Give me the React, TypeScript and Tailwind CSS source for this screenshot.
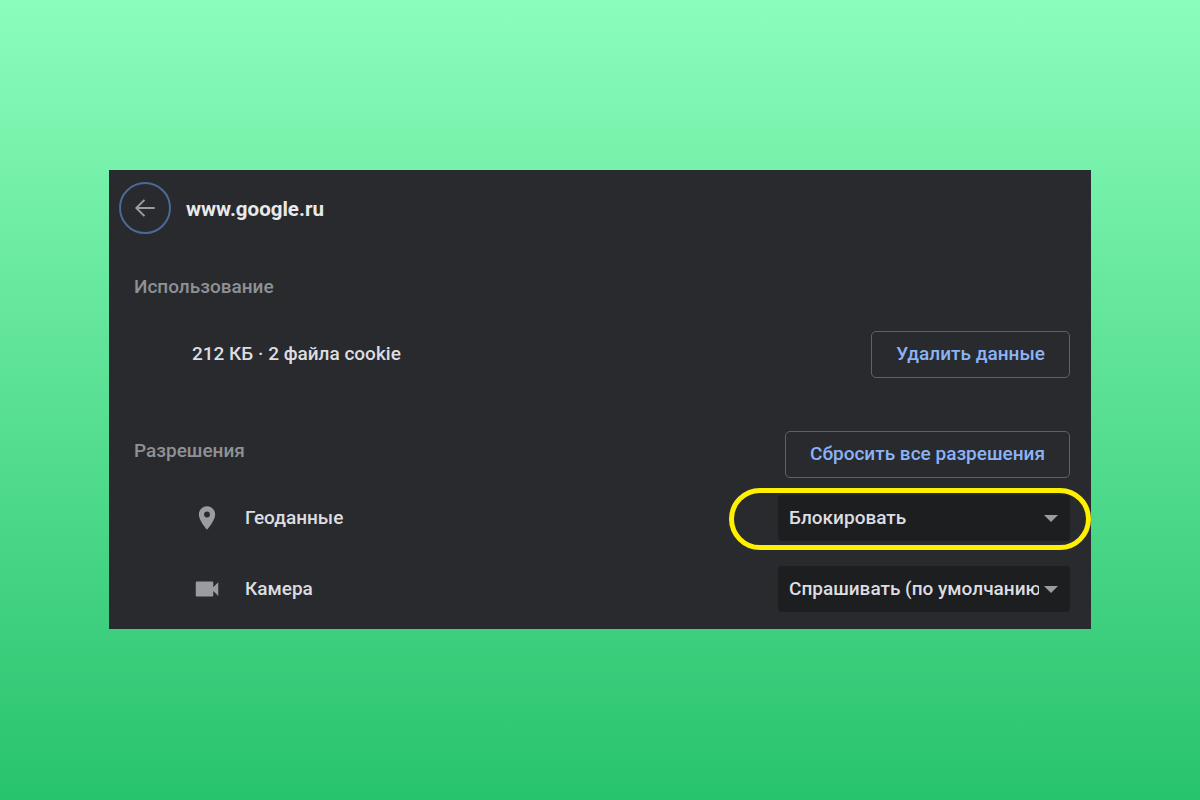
const font = "[font-family:Roboto,'Liberation_Sans',sans-serif]"

function SelectBox({ label, children }: { label: string; children?: React.ReactNode }) {
  return (
    <div className="relative flex h-[46px] w-[292px] items-center rounded-[4px] bg-[#1d1e20] pl-[11px] pr-[12px]">
      <span className="min-w-0 flex-1 overflow-hidden whitespace-nowrap text-[19px] font-medium text-[#dcdde0]">{label}</span>
      <span className="ml-[5px] h-0 w-0 shrink-0 border-x-[7px] border-t-[7px] border-x-transparent border-t-[#9a9ca0]" />
      {children}
    </div>
  )
}

function PermissionRow({ icon, label, value, mark }: { icon: React.ReactNode; label: string; value: string; mark?: boolean }) {
  return (
    <div className="flex h-[46px] items-center pl-[83px] pr-[21px]">
      <div className="flex w-[30px] justify-center">{icon}</div>
      <span className="ml-[23px] flex-1 text-[19px] font-medium text-[#dcdde0]">{label}</span>
      <SelectBox label={value}>
        {mark && (
          <div className="absolute left-[-49px] top-[-7px] h-[62px] w-[362px] rounded-full border-[5px] border-[#fff000]" />
        )}
      </SelectBox>
    </div>
  )
}

function OutlineButton({ label, width }: { label: string; width: string }) {
  return (
    <button className={`flex h-[47px] items-center justify-center rounded-[5px] border border-[#5f6368] text-[19px] font-medium text-[#8ab4f8] ${width}`}>
      {label}
    </button>
  )
}

export default function App() {
  return (
    <div className={`flex h-[800px] w-full justify-center bg-linear-to-b/srgb from-[#8bfdbb] to-[#28c36d] pt-[170px] ${font}`}>
      <div className="h-[459px] w-[982px] bg-[#292a2d]">
        {/* Header */}
        <div className="flex items-center pl-[10px] pt-[12px]">
          <div className="flex h-[52px] w-[52px] items-center justify-center rounded-full border-2 border-[#4a6a97]">
            <svg width="26" height="26" viewBox="0 0 24 24" fill="none" stroke="#9a9ca0" strokeWidth="1.8">
              <path d="M21 12H4M11.5 4.5 4 12l7.5 7.5" />
            </svg>
          </div>
          <span className="ml-[15px] mt-[2px] text-[20.5px] font-bold text-[#e8e9eb]">www.google.ru</span>
        </div>

        {/* Usage */}
        <div className="mt-[42px] pl-[25px] text-[19px] font-medium leading-[22px] text-[#8f9195]">Использование</div>
        <div className="mt-[33px] flex items-center pl-[83px] pr-[21px]">
          <span className="flex-1 text-[19px] font-medium text-[#dcdde0]">212 КБ · 2 файла cookie</span>
          <OutlineButton label="Удалить данные" width="w-[199px]" />
        </div>

        {/* Permissions */}
        <div className="mt-[53px] flex items-center pl-[25px] pr-[21px]">
          <span className="mb-[6px] flex-1 text-[19px] font-medium text-[#8f9195]">Разрешения</span>
          <OutlineButton label="Сбросить все разрешения" width="w-[285px]" />
        </div>
        <div className="mt-[17px] flex flex-col gap-[25px]">
          <PermissionRow
            label="Геоданные"
            value="Блокировать"
            mark
            icon={
              <svg width="28" height="28" viewBox="0 0 24 24" fill="#9a9ca0">
                <path d="M12 2C8.13 2 5 5.13 5 9c0 5.25 7 13 7 13s7-7.75 7-13c0-3.87-3.13-7-7-7zm0 9.5a2.5 2.5 0 0 1 0-5 2.5 2.5 0 0 1 0 5z" />
              </svg>
            }
          />
          <PermissionRow
            label="Камера"
            value="Спрашивать (по умолчанию)"
            icon={
              <svg width="30" height="30" viewBox="0 0 24 24" fill="#9a9ca0">
                <path d="M17 10.5V7c0-.55-.45-1-1-1H4c-.55 0-1 .45-1 1v10c0 .55.45 1 1 1h12c.55 0 1-.45 1-1v-3.5l4 4v-11l-4 4z" />
              </svg>
            }
          />
        </div>
      </div>
    </div>
  )
}
